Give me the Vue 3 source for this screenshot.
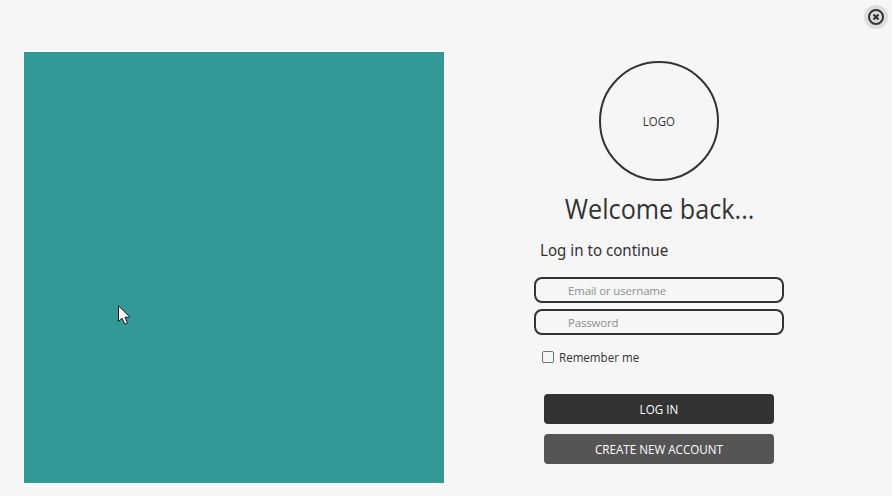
<script setup>
import { ref } from 'vue'

const login = ref('')
const password = ref('')
const remember = ref(false)
</script>

<template>
  <div class="window">
    <main class="content">
      <section class="artwork"></section>
      <section class="panel">
        <div class="logo"><span>LOGO</span></div>
        <h1>Welcome back...</h1>
        <form class="form" @submit.prevent>
          <h2>Log in to continue</h2>
          <input v-model="login" class="field" type="text" placeholder="Email or username" />
          <input v-model="password" class="field" type="password" placeholder="Password" />
          <label class="remember">
            <input v-model="remember" type="checkbox" />
            <span>Remember me</span>
          </label>
          <button class="primary" type="submit"><span>LOG IN</span></button>
          <button class="secondary" type="button"><span>CREATE NEW ACCOUNT</span></button>
        </form>
      </section>
    </main>
    <button class="close" type="button" aria-label="Close">
      <svg width="24" height="24" viewBox="0 0 24 24" fill="none" stroke="#333333">
        <circle cx="12" cy="12" r="7" stroke-width="2" />
        <path d="M9.5 9.5l5 5m0-5l-5 5" stroke-width="2.2" />
      </svg>
    </button>
    <svg class="cursor" width="13" height="21" viewBox="0 0 13 21">
      <path d="M.5 .8V16.5L4.1 13.2L6.8 19.2L9.5 18L6.9 12.2H12Z" fill="#fff" stroke="#101820" />
    </svg>
  </div>
</template>

<style>
body {
  margin: 0;
  overflow: hidden;
}
</style>

<style scoped>
* {
  box-sizing: border-box;
}
.window {
  position: relative;
  width: 892px;
  height: 496px;
  background: #f6f6f6;
  color: #333333;
  font: 12px/16px "Open Sans", "Noto Sans", sans-serif;
}
.content {
  display: flex;
  gap: 90px;
  padding: 52px 0 0 24px;
}
.artwork {
  width: 420px;
  height: 431px;
  background: #329997;
}
.panel {
  display: flex;
  flex-direction: column;
  align-items: center;
  width: 250px;
  padding-top: 9px;
}
.logo {
  display: grid;
  place-items: center;
  width: 120px;
  height: 120px;
  padding-top: 2px;
  border: 2px solid #333333;
  border-radius: 50%;
}
.logo span {
  transform: scaleX(0.95);
}
h1 {
  margin: 10px 0 0 2px;
  font-size: 27px;
  line-height: 36px;
  font-weight: 400;
  white-space: nowrap;
  transform: scaleX(0.933);
}
.form {
  display: flex;
  flex-direction: column;
  width: 250px;
}
h2 {
  margin: 12px 0 0 6px;
  font: 400 16px/22px "Noto Sans", sans-serif;
  transform: scaleX(0.944);
  transform-origin: left;
}
.field {
  width: 250px;
  height: 26px;
  margin: 16px 0 0;
  padding: 0 32px;
  border: 2px solid #333333;
  border-radius: 8px;
  outline: 0;
  background: transparent;
  color: #333333;
  font: inherit;
  font-size: 11.4px;
  letter-spacing: -0.12px;
}
.field + .field {
  margin-top: 6px;
}
.field::placeholder {
  color: #8b8f8f;
  opacity: 1;
}
.remember {
  display: flex;
  align-items: center;
  gap: 5px;
  height: 16px;
  margin: 14px 0 0 8px;
}
.remember span {
  padding-top: 2px;
  transform: scaleX(0.965);
  transform-origin: left;
}
.remember input {
  appearance: none;
  width: 12px;
  height: 12px;
  margin: 0;
  border: 1px solid #707070;
  border-radius: 2px;
}
.remember input:checked {
  background: #333333;
}
.primary,
.secondary {
  width: 230px;
  height: 30px;
  margin: 29px 10px 0;
  padding: 2px 0 0;
  border: 0;
  border-radius: 4px;
  background: #333333;
  color: #fff;
  font: inherit;
}
.primary span,
.secondary span {
  display: inline-block;
  transform: scaleX(0.97);
}
.secondary {
  margin-top: 10px;
  background: #555555;
}
.close {
  position: absolute;
  top: 5px;
  right: 4px;
  width: 24px;
  height: 24px;
  padding: 0;
  border: 0;
  border-radius: 50%;
  background: #dddddd;
}
.close svg {
  display: block;
}
.cursor {
  position: absolute;
  top: 305px;
  left: 118px;
}
</style>
